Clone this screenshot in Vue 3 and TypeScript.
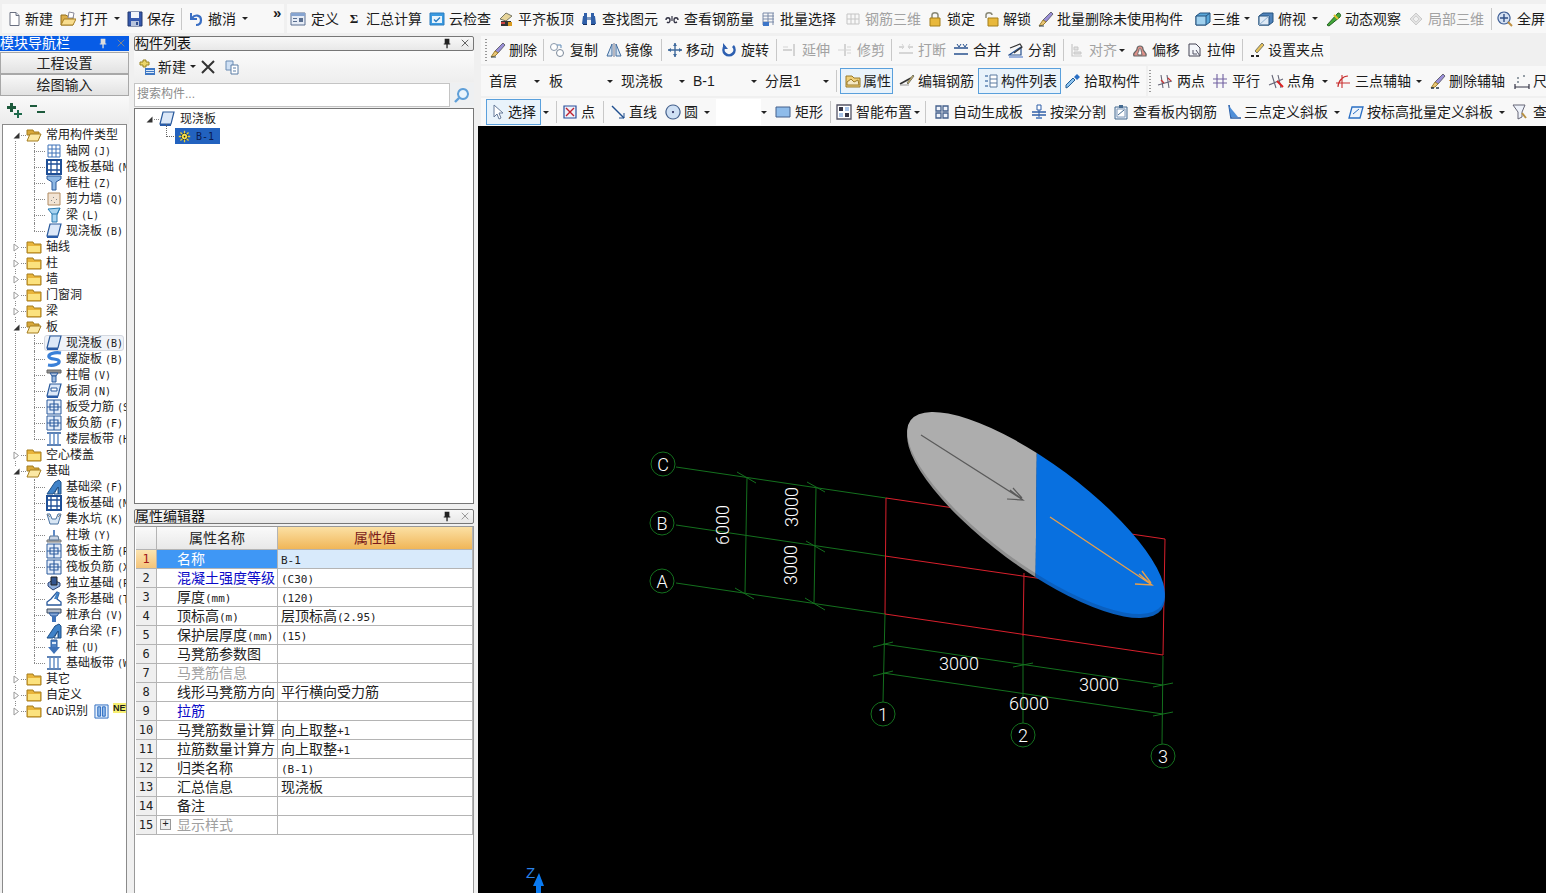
<script setup lang="ts">
import { h } from 'vue'
import type { FunctionalComponent } from 'vue'

type P = [string, string, string?, number?]
const icons: Record<string, P[]> = {
  doc: [['M4 1.5h6l3 3v10H4z', '#fff', '#6a7080'], ['M10 1.5v3h3', '#dde3ee', '#6a7080']],
  open: [['M1 4h5l1 1h6v9H1z', '#dcae4a', '#94701e'], ['M9 1l5 1-1 5H8z', '#fff', '#889'], ['M4 8h12l-3 6H1z', '#f8dd8e', '#a67f24']],
  save: [['M1 1h14v14H1z', '#3558ac', '#22386e'], ['M4 1h8v6H4z', '#f2f4fa'], ['M4 10h8v5H4z', '#b8c4dc'], ['M9 11h2v3H9z', '#33508f']],
  undo: [['M3 2v6h6', 'none', '#3a6fc4', 2], ['M4 7c3-4 9-3 9 2 0 3-2 5-5 5', 'none', '#3a6fc4', 2.2]],
  table: [['M1 2h14v12H1z', '#e6ecf6', '#5a6f90'], ['M1 2h14v3H1z', '#86a4d0'], ['M3 7h4v1H3zM3 10h4v1H3zM9 7h4v4H9z', '#5a6f90']],
  cloud: [['M1 2h14v12H1z', '#3a9ae0', '#2b7cc0'], ['M3 5h10v7H3z', '#e8f4fc'], ['M5 8.5l2 2 4-4', 'none', '#2b7cc0', 1.4]],
  alignTop: [['M2 8l6-6 6 3-6 5z', '#e6d49a', '#776'], ['M3 10h10v5H3z', '#333'], ['M10 11h4v4h-4z', '#d99a20'], ['M3 11h4v2H3z', '#c44']],
  find: [['M3 2h3v3H3zM10 2h3v3h-3z', '#2f5fa8'], ['M2 5h4v8H1z', '#2f5fa8'], ['M10 5h4l1 8h-5z', '#2f5fa8'], ['M6 6h4v3H6z', '#7f98bd'], ['M2 13h4v1H2zM10 13h4v1h-4z', '#16305f']],
  view: [['M2 9c0-3 4-3 4 0s-2 3-3 2M14 9c0-3-4-3-4 0s1 3 3 2', 'none', '#334', 1.4], ['M8 5v5', 'none', '#334', 1.2]],
  batch: [['M2 2h11M2 5h11M2 8h11M2 11h11M2 2v12M7 2v12M12 2v12', 'none', '#7a8aa8', 1], ['M2 11h6v4H2z', '#3d76c8']],
  rebar3d: [['M2 3h12v10H2zM6 3v10M10 3v10M2 8h12', 'none', '#b8b8b8', 1]],
  lock: [['M5 7V4c0-3 6-3 6 0v3', 'none', '#887', 1.5], ['M3 7h10v8H3z', '#e8b83c', '#a47e1a']],
  unlock: [['M3 7V4c0-3 6-3 6 0', 'none', '#887', 1.5], ['M5 7h10v8H5z', '#e8b83c', '#a47e1a']],
  brush: [['M13 1l2 2-7 8-3-2z', '#9a8fd8', '#667'], ['M5 9l3 2-3 3-4 1z', '#eac777', '#a08030'], ['M1 15h5', 'none', '#345', 1]],
  cube: [['M1 5l4-3h10v9l-4 3H1z', '#58a6d8', '#24527e'], ['M1 5h10v9H1z', '#9fd0ee', '#24527e'], ['M11 5l4-3', 'none', '#24527e']],
  cubeTop: [['M1 5l4-3h10v9l-4 3H1z', '#4f83bb', '#24527e'], ['M1 5h10v9H1z', '#dfeaf5', '#24527e'], ['M1 14l10-9', 'none', '#8fb0d0']],
  orbit: [['M1 14L12 2c3 0 3 3 2 4L3 15z', '#44a83a', '#236020'], ['M8 4l4 4', 'none', '#e0c030', 2]],
  local3d: [['M2 8l6-6 6 6-6 6z', '#ddd', '#c0c0c0'], ['M5 8l3-3 3 3-3 3z', '#f0f0f0', '#c8c8c8']],
  full: [['M7 1a6 6 0 1 0 .01 0z', '#d4e0f2', '#3f5f96', 1.2], ['M7 3v8M3 7h8', 'none', '#2f4f86', 1.4], ['M11 11l4 4', 'none', '#c09040', 2]],
  copy2: [['M5 5m-3.5 0a3.5 3.5 0 1 0 7 0a3.5 3.5 0 1 0-7 0', '#fff', '#8a98aa'], ['M11 11m-3.5 0a3.5 3.5 0 1 0 7 0a3.5 3.5 0 1 0-7 0', '#fff', '#7a8898'], ['M8 3l4 0 0 3', 'none', '#5f8bb8']],
  mirror: [['M1 14L6 2v12z', '#d8e6f4', '#3f6a9c'], ['M15 14L10 2v12z', '#d8e6f4', '#3f6a9c'], ['M8 1v14', 'none', '#778']],
  move: [['M8 1v14M1 8h14', 'none', '#3f6a9c', 1.4], ['M8 1l-2 3h4zM8 15l-2-3h4zM1 8l3-2v4zM15 8l-3-2v4z', '#3f6a9c']],
  rotate: [['M12 4a5.5 5.5 0 1 1-8 0', 'none', '#2d5fb0', 2.6], ['M2 1v6h5z', '#2d5fb0']],
  extend: [['M12 2v12', 'none', '#b8b8b8', 1.4], ['M1 8h9', 'none', '#b8b8b8', 1.4], ['M1 5h5', 'none', '#ccc', 1]],
  trim: [['M8 2v12', 'none', '#b8b8b8', 1.4], ['M1 8h13M10 5h4M10 11h4', 'none', '#ccc', 1]],
  breakx: [['M1 5h5M10 5h5M1 11h14', 'none', '#c0c0c0', 1.4], ['M4 2l2 3-2 2M12 2l-2 3 2 2', 'none', '#ccc', 1]],
  merge: [['M1 6h14M1 12h14', 'none', '#28528f', 1.6], ['M4 2l2 3 2-3M10 2l2 3 2-3', 'none', '#28528f', 1]],
  split: [['M1 13l12-8v8z', 'none', '#25508f', 1.2], ['M2 6l10-4 2 3-8 6', 'none', '#333', 1.2], ['M1 15h14', 'none', '#3f6ac0', 1]],
  align2: [['M3 2v12h10', 'none', '#bbb', 1.2], ['M5 5h4v3H5zM5 10h7v2H5z', '#ddd', '#bbb']],
  offset: [['M2 14c-2-4 3-4 3-7 0-4 6-4 6 0 0 3 4 3 3 7z', '#e09088', '#666', 1.2], ['M6 13c-1-2 1-3 1-5s2-2 2 0 1 3 1 5z', '#fff', '#666']],
  stretch: [['M2 2h7l4 4v8H2z', '#f4f6fa', '#445'], ['M9 8l4 6M6 8v4h4', 'none', '#556']],
  grip: [['M13 1l2 2-7 8-2-2z', '#e8c35a', '#776'], ['M2 14h3M7 14h3', 'none', '#222', 2]],
  attr: [['M1 3h6l2 2h6v9H1z', '#efcf78', '#9a7a28'], ['M2 9l4-3 3 3 4-2 1 5H2z', '#f4e8c4', '#9a7a28']],
  editRebar: [['M1 11l11-6', 'none', '#333', 1.6], ['M8 10l6-8 1 1-6 8z', '#e2bf5e', '#776'], ['M1 12h9', 'none', '#999', 1]],
  list: [['M2 2h3v2H2zM2 7h3v2H2zM2 12h3v2H2z', '#7f9fc4'], ['M7 2h7v12H7z', '#fff', '#5a7aa0'], ['M7 6h7M7 10h7', 'none', '#5a7aa0']],
  pick: [['M1 15l2-1 7-7-2-2-7 7z', '#8fc4ee', '#245e96'], ['M9 4l3-3 3 3-3 3z', '#2a6fc4']],
  twoPt: [['M1 12L15 8M4 2l2 13M10 2l2 13', 'none', '#667', 1.1], ['M4 7l3 3M11 5l3 3', 'none', '#c33', 1.2]],
  parallel: [['M5 1v14M11 1v14M1 6h14M1 10h14', 'none', '#7060a0', 1.1]],
  angle: [['M1 12L15 6M4 2l4 13M10 2l3 13', 'none', '#667', 1.1], ['M9 8l6 6', 'none', '#d22', 2]],
  threePt: [['M1 10h14M7 2v13M3 14c0-6 5-11 10-11', 'none', '#c83030', 1.1]],
  delAux: [['M13 1l2 2-7 8-3-2z', '#9a8fd8', '#667'], ['M5 9l3 2-3 3-4 1z', '#eac777', '#a08030'], ['M1 15h3M6 15h3', 'none', '#234', 1.4]],
  ruler: [['M1 14h14M1 11v5M15 11v5', 'none', '#334', 1.2], ['M3 9h2M3 5h2M9 3h2', 'none', '#345', 1.2]],
  arrow: [['M3 1v12l3-3 2 5 2-1-2-5h4z', '#fff', '#667a99']],
  point: [['M2 2h12v12H2z', '#eef2fa', '#2a4f9c', 1.2], ['M4 4l8 8M12 4l-8 8', 'none', '#c02030', 1.4]],
  line: [['M2 2l12 12', 'none', '#1f4f8f', 1.4], ['M14 9v5H9', 'none', '#1f4f8f', 1]],
  circle: [['M8 1a7 7 0 1 0 .01 0z', '#cfe0f4', '#44608c', 1.2], ['M8 7a1 1 0 1 0 .01 0z', '#225']],
  rect: [['M1 3h14v10H1z', '#8fbcea', '#44608c']],
  smart: [['M1 1h14v14H1z', '#fff', '#556', 1.3], ['M3 3h4v4H3zM9 9h4v4H9z', '#334'], ['M9 3h4v4H9zM3 9h4v4H3z', '#a8c4e8']],
  autogen: [['M2 2h5v5H2zM9 2h5v5H9zM2 9h5v5H2zM9 9h5v5H9z', '#eef2fa', '#44608c', 1.3]],
  beamSplit: [['M6 1h4v5H6z', '#fff', '#2f5fa8'], ['M1 8h14M1 11h14', 'none', '#2f5fa8', 1.4], ['M8 6v9', 'none', '#2f5fa8', 1], ['M5 13h6v2H5z', '#6f94c8']],
  viewBoard: [['M2 3h12v12H2z', '#e8eef6', '#446a90'], ['M4 5h8v8H4z', '#fff', '#7f98b8'], ['M5 11l6-5', 'none', '#446a90'], ['M6 1h4v3H6z', '#446a90']],
  threeSlope: [['M3 1l2 13h10', 'none', '#2a5fa8', 1.6], ['M3 2l9 11H5z', '#4f8fd8']],
  heightSlope: [['M4 3h11l-3 11H1z', '#eef4fb', '#2a6fc4', 1.3], ['M5 10l6-5', 'none', '#2a6fc4']],
  viewQ: [['M1 1h12l-3 7v5l-4 2V8z', '#eef2fa', '#667'], ['M10 9l4 5', 'none', '#b89040', 2]],
  newList: [['M1 3h3V1h3v2h3v3H7v2H4V6H1z', '#ecd66a', '#9a8420'], ['M6 9h10v7H6z', '#3f78c4'], ['M7 11h8v1H7zM7 13h8v1H7z', '#dce8f6']],
  xBig: [['M2 2l12 12M14 2L2 14', 'none', '#333', 2]],
  copy: [['M2 2h7v9H2z', '#cfe0f4', '#6a8cb4'], ['M7 6h7v9H7z', '#fff', '#5a7ca4'], ['M9 9h3M9 12h3', 'none', '#5a7ca4']],
  search: [['M9 2a5 5 0 1 0 .01 0z', '#eaf4fc', '#5f9fd8', 2], ['M5 11l-4 4', 'none', '#5f9fd8', 2.4]],
  plusTree: [['M3 1h3v3h3v3H6v3H3V7H0V4h3z', '#1d5a3c'], ['M10 8h2v3h3v2h-3v3h-2v-3H7v-2h3z', '#1d6a4c']],
  minusTree: [['M0 3h7v2H0z', '#1d5a3c'], ['M7 9h8v2H7z', '#1d5a3c']],
  foldC: [['M1 3h6l1 2h7v9H1z', '#e8b43a', '#a47c1e'], ['M2 7h12v6H2z', '#fbe27e']],
  foldO: [['M1 3h6l1 2h5v3H1z', '#d8a83a', '#a47c1e'], ['M1 14l3-7h11l-3 7z', '#fbe8a4', '#a47c1e']],
  grid: [['M2 2v12M6 2v12M10 2v12M14 2v12M2 2h12M2 6h12M2 10h12M2 14h12', 'none', '#3f72b8', 1]],
  raft: [['M1 1h14v14H1z', '#fff', '#1f4f96', 2], ['M5 1v14M11 1v14M1 5h14M1 11h14', 'none', '#1f4f96', 1.3]],
  column: [['M1 1h14v3l-5 3v8H6V7L1 4z', '#8fb8e4', '#2a5a9c']],
  wall: [['M2 2h12v12H2z', '#f2e4d4', '#b08a60'], ['M5 9h1v1H5zM8 11h1v1H8zM10 8h1v1h-1zM7 6h1v1H7z', '#888']],
  beam: [['M2 2l12-1-3 7v7H6V7z', '#a8d4f0', '#2a7ab0'], ['M6 7h5l3-6', 'none', '#2a7ab0']],
  slab: [['M4 1h11l-3 12H1z', '#dce8f8', '#2a5a9c', 1.2], ['M1 13h11v2H1z', '#2a5ca8']],
  spiral: [['M15 2C8 1 2 3 3 6s9 1 10 4-5 5-11 4', 'none', '#3a80d8', 3.2]],
  cap: [['M1 3h14v3H1z', '#909090', '#666'], ['M4 6h8l-2 3H6z', '#b8c8e0', '#2a5a9c'], ['M6 9h4v6H6z', '#a0bce0', '#2a5a9c']],
  hole: [['M4 1h11l-3 12H1z', '#dce8f8', '#2a5a9c', 1.2], ['M5 5h6v3H5z', '#fff', '#2a5a9c'], ['M1 13h11v2H1z', '#2a5ca8']],
  rebarP: [['M1 1h14v14H1z', '#e6eefa', '#2a5a9c'], ['M8 1v14M1 8h14M4 5h8v6H4z', 'none', '#2a5a9c', 1.1]],
  strip: [['M1 2h14M1 14h14', 'none', '#2a5a9c', 1.6], ['M4 2v12M8 2v12M12 2v12', 'none', '#5f8ac4', 1.4]],
  fbeam: [['M1 15L9 3l4-2 2 2v12h-3V8L7 15z', '#3f82c8', '#1d4f86'], ['M8 15l4-7 0 7z', '#fff', '#1d4f86']],
  sump: [['M1 3h3l2 5h4l2-5h3l-3 10H4z', '#d8e6f4', '#4a72a0'], ['M1 3l3 3M15 3l-3 3', 'none', '#888']],
  pier: [['M1 13h14v2H1z', '#bbb', '#777'], ['M4 9h8l1 4H3z', '#c8d4e4', '#55708f'], ['M7 3h2v6H7z', '#5f8ac4']],
  iso: [['M2 8l5-3 7 3v3l-7 4-5-4z', '#8faedc', '#263f72'], ['M5 2h6v8H5z', '#33558f', '#222']],
  stripf: [['M1 14h14v-3l-4-3 2-6-2-1-6 7-4 3z', '#fff', '#2a5a9c', 1.3], ['M8 8l3-7 2 1-2 6z', '#3f82c8']],
  pilecap: [['M1 2h14v4H1z', '#b0bac8', '#3a4a60'], ['M3 6h10l-2 3H5z', '#86a8d8', '#2a5a9c'], ['M6 9h4v6H6z', '#3f72b8']],
  pile: [['M5 1h6v8H5z', '#4f82c4', '#2a5a9c'], ['M2 8h12l-6 7z', '#3f72b8'], ['M6 3h4v2H6z', '#dce8f8']],
  cadI: [['M1 1h14v14H1z', '#e6f0fb', '#2a6ac0'], ['M4 3h3v10H4zM9 3h3v10H9z', '#8fb8e8', '#2a6ac0']],
  pin: [['M5 3h5v5h1v1H8.2v4H6.8V9H4V8h1z', '#222']],
  closeX: [['M4 4l7 7M11 4l-7 7', 'none', '#555', 1]],
  sun: [['M8 4a4 4 0 1 0 .01 0z', '#f4e04c', '#222'], ['M8 1v3M8 12v3M1 8h3M12 8h3M3 3l2 2M11 11l2 2M13 3l-2 2M5 11l-2 2', 'none', '#e8d030', 1.6], ['M8 7a1 1 0 1 0 .01 0z', '#222']],
}

const Ico: FunctionalComponent<{ n: string }> = (props) =>
  h('svg', { class: 'ico', width: 16, height: 16, viewBox: '0 0 16 16' },
    (icons[props.n] || []).map((p, j) =>
      h('path', { key: j, d: p[0], fill: p[1], stroke: p[2] || 'none', 'stroke-width': p[3] || 1 })))
Ico.props = ['n']

interface Tool { x: number; k?: string; i?: string; sym?: string; t?: string; tx?: number; dis?: boolean; on?: boolean; ox?: number; w?: number }
interface Strip { x: number; end: number; items: Tool[]; ml?: number; w?: number; pl?: number }

const layoutRow = (strips: Strip[], start: number): Strip[] => {
  let cur = start
  return strips.map((s) => {
    const items = s.items.map((it, j) => ({ ...it, w: (j + 1 < s.items.length ? s.items[j + 1].x : s.end) - it.x }))
    const r = { ...s, items, ml: s.x - cur, w: s.end - s.x, pl: s.items[0].x - s.x }
    cur = s.end
    return r
  })
}
const labelGap = (it: Tool) => (it.tx === undefined ? 0 : it.tx - it.x - (it.ox || 0) - (it.i || it.sym ? 16 : 0))

const topRow = layoutRow([
  { x: 2, end: 284, items: [
    { x: 6, i: 'doc', tx: 25, t: '新建' }, { x: 60, i: 'open', tx: 80, t: '打开' }, { x: 114, k: 'caret' },
    { x: 127, i: 'save', tx: 147, t: '保存' }, { x: 181, k: 'sep' }, { x: 188, i: 'undo', tx: 208, t: '撤消' },
    { x: 242, k: 'caret' }, { x: 273, k: 'more', t: '»' },
  ] },
  { x: 287, end: 1546, items: [
    { x: 290, i: 'table', tx: 311, t: '定义' }, { x: 346, sym: 'Σ', tx: 366, t: '汇总计算' },
    { x: 429, i: 'cloud', tx: 449, t: '云检查' }, { x: 498, i: 'alignTop', tx: 518, t: '平齐板顶' },
    { x: 581, i: 'find', tx: 602, t: '查找图元' }, { x: 664, i: 'view', tx: 684, t: '查看钢筋量' },
    { x: 761, i: 'batch', tx: 780, t: '批量选择' }, { x: 845, i: 'rebar3d', tx: 865, t: '钢筋三维', dis: true },
    { x: 927, i: 'lock', tx: 947, t: '锁定' }, { x: 983, i: 'unlock', tx: 1003, t: '解锁' },
    { x: 1038, i: 'brush', tx: 1057, t: '批量删除未使用构件' }, { x: 1195, i: 'cube', tx: 1212, t: '三维' },
    { x: 1244, k: 'caret' }, { x: 1258, i: 'cubeTop', tx: 1278, t: '俯视' }, { x: 1312, k: 'caret' },
    { x: 1326, i: 'orbit', tx: 1345, t: '动态观察' }, { x: 1408, i: 'local3d', tx: 1428, t: '局部三维', dis: true },
    { x: 1491, k: 'sep' }, { x: 1497, i: 'full', tx: 1517, t: '全屏' },
  ] },
], 0)

const rows = [
  layoutRow([{ x: 481, end: 1330, items: [
    { x: 485, k: 'grip' }, { x: 490, i: 'brush', tx: 509, t: '删除' }, { x: 543, k: 'sep' },
    { x: 549, i: 'copy2', tx: 570, t: '复制' }, { x: 606, i: 'mirror', tx: 625, t: '镜像' }, { x: 661, k: 'sep' },
    { x: 667, i: 'move', tx: 686, t: '移动' }, { x: 721, i: 'rotate', tx: 741, t: '旋转' }, { x: 776, k: 'sep' },
    { x: 782, i: 'extend', tx: 802, t: '延伸', dis: true }, { x: 837, i: 'trim', tx: 857, t: '修剪', dis: true }, { x: 891, k: 'sep' },
    { x: 898, i: 'breakx', tx: 918, t: '打断', dis: true }, { x: 953, i: 'merge', tx: 973, t: '合并' },
    { x: 1008, i: 'split', tx: 1028, t: '分割' }, { x: 1063, k: 'sep' }, { x: 1069, i: 'align2', tx: 1089, t: '对齐', dis: true },
    { x: 1119, k: 'caret' }, { x: 1132, i: 'offset', tx: 1152, t: '偏移' }, { x: 1187, i: 'stretch', tx: 1207, t: '拉伸' },
    { x: 1242, k: 'sep' }, { x: 1249, i: 'grip', tx: 1268, t: '设置夹点' },
  ] }], 478),
  layoutRow([
    { x: 481, end: 1146, items: [
      { x: 489, tx: 489, t: '首层' }, { x: 534, k: 'caret' }, { x: 549, tx: 549, t: '板' }, { x: 607, k: 'caret' },
      { x: 621, tx: 621, t: '现浇板' }, { x: 679, k: 'caret' }, { x: 693, tx: 693, t: 'B-1' }, { x: 751, k: 'caret' },
      { x: 765, tx: 765, t: '分层1' }, { x: 823, k: 'caret' }, { x: 836, k: 'sep' },
      { x: 840, i: 'attr', tx: 863, t: '属性', on: true, ox: 5 }, { x: 893, k: 'gap' }, { x: 899, i: 'editRebar', tx: 918, t: '编辑钢筋' },
      { x: 978, i: 'list', tx: 1001, t: '构件列表', on: true, ox: 5 }, { x: 1061, k: 'gap' }, { x: 1065, i: 'pick', tx: 1084, t: '拾取构件' },
    ] },
    { x: 1148, end: 1546, items: [
      { x: 1149, k: 'grip' }, { x: 1157, i: 'twoPt', tx: 1177, t: '两点' }, { x: 1212, i: 'parallel', tx: 1232, t: '平行' },
      { x: 1268, i: 'angle', tx: 1287, t: '点角' }, { x: 1322, k: 'caret' }, { x: 1335, i: 'threePt', tx: 1355, t: '三点辅轴' },
      { x: 1416, k: 'caret' }, { x: 1430, i: 'delAux', tx: 1449, t: '删除辅轴' }, { x: 1514, i: 'ruler', tx: 1533, t: '尺' },
    ] },
  ], 478),
  layoutRow([{ x: 481, end: 1546, items: [
    { x: 486, i: 'arrow', tx: 508, t: '选择', on: true, ox: 5 }, { x: 541, k: 'gap' }, { x: 543, k: 'caret' }, { x: 556, k: 'sep' },
    { x: 562, i: 'point', tx: 581, t: '点' }, { x: 603, k: 'sep' }, { x: 610, i: 'line', tx: 629, t: '直线' },
    { x: 665, i: 'circle', tx: 684, t: '圆' }, { x: 704, k: 'caret' }, { x: 716, k: 'blank' }, { x: 761, k: 'caret' },
    { x: 775, i: 'rect', tx: 795, t: '矩形' }, { x: 830, k: 'sep' }, { x: 836, i: 'smart', tx: 856, t: '智能布置' },
    { x: 914, k: 'caret' }, { x: 925, k: 'sep' }, { x: 934, i: 'autogen', tx: 953, t: '自动生成板' },
    { x: 1031, i: 'beamSplit', tx: 1050, t: '按梁分割' }, { x: 1113, i: 'viewBoard', tx: 1133, t: '查看板内钢筋' },
    { x: 1226, i: 'threeSlope', tx: 1244, t: '三点定义斜板' }, { x: 1334, k: 'caret' },
    { x: 1348, i: 'heightSlope', tx: 1367, t: '按标高批量定义斜板' }, { x: 1499, k: 'caret' }, { x: 1512, i: 'viewQ', tx: 1533, t: '查' },
  ] }], 478),
]

interface Node { l: number; t: string; c?: string; i?: string; open?: boolean; last?: boolean; hov?: boolean; cad?: boolean }
const tree: Node[] = [
  { l: 0, t: '常用构件类型', open: true },
  { l: 1, i: 'grid', t: '轴网', c: '(J)' }, { l: 1, i: 'raft', t: '筏板基础', c: '(M)' }, { l: 1, i: 'column', t: '框柱', c: '(Z)' },
  { l: 1, i: 'wall', t: '剪力墙', c: '(Q)' }, { l: 1, i: 'beam', t: '梁', c: '(L)' }, { l: 1, i: 'slab', t: '现浇板', c: '(B)', last: true },
  { l: 0, t: '轴线' }, { l: 0, t: '柱' }, { l: 0, t: '墙' }, { l: 0, t: '门窗洞' }, { l: 0, t: '梁' },
  { l: 0, t: '板', open: true },
  { l: 1, i: 'slab', t: '现浇板', c: '(B)', hov: true }, { l: 1, i: 'spiral', t: '螺旋板', c: '(B)' }, { l: 1, i: 'cap', t: '柱帽', c: '(V)' },
  { l: 1, i: 'hole', t: '板洞', c: '(N)' }, { l: 1, i: 'rebarP', t: '板受力筋', c: '(S)' }, { l: 1, i: 'rebarP', t: '板负筋', c: '(F)' },
  { l: 1, i: 'strip', t: '楼层板带', c: '(H)', last: true },
  { l: 0, t: '空心楼盖' },
  { l: 0, t: '基础', open: true },
  { l: 1, i: 'fbeam', t: '基础梁', c: '(F)' }, { l: 1, i: 'raft', t: '筏板基础', c: '(M)' }, { l: 1, i: 'sump', t: '集水坑', c: '(K)' },
  { l: 1, i: 'pier', t: '柱墩', c: '(Y)' }, { l: 1, i: 'rebarP', t: '筏板主筋', c: '(R)' }, { l: 1, i: 'rebarP', t: '筏板负筋', c: '(X)' },
  { l: 1, i: 'iso', t: '独立基础', c: '(P)' }, { l: 1, i: 'stripf', t: '条形基础', c: '(T)' }, { l: 1, i: 'pilecap', t: '桩承台', c: '(V)' },
  { l: 1, i: 'fbeam', t: '承台梁', c: '(F)' }, { l: 1, i: 'pile', t: '桩', c: '(U)' }, { l: 1, i: 'strip', t: '基础板带', c: '(W)', last: true },
  { l: 0, t: '其它' }, { l: 0, t: '自定义' }, { l: 0, t: 'CAD识别', cad: true },
]

const runs = (s: string) =>
  (s.match(/[\x00-\x7f]+|[^\x00-\x7f]+/g) || []).map((t) => ({ t, lat: /^[\x00-\x7f]/.test(t) }))

const props = [
  { n: '名称', v: 'B-1', sel: true },
  { n: '混凝土强度等级', v: '(C30)', tone: 'blue' },
  { n: '厚度(mm)', v: '(120)' },
  { n: '顶标高(m)', v: '层顶标高(2.95)' },
  { n: '保护层厚度(mm)', v: '(15)' },
  { n: '马凳筋参数图', v: '' },
  { n: '马凳筋信息', v: '', tone: 'gray' },
  { n: '线形马凳筋方向', v: '平行横向受力筋' },
  { n: '拉筋', v: '', tone: 'blue' },
  { n: '马凳筋数量计算', v: '向上取整+1' },
  { n: '拉筋数量计算方', v: '向上取整+1' },
  { n: '归类名称', v: '(B-1)' },
  { n: '汇总信息', v: '现浇板' },
  { n: '备注', v: '' },
  { n: '显示样式', v: '', tone: 'gray', plus: true },
]

const greenLines = [
  'M676 467L886 498', 'M676 525L885 556', 'M676 583L885 614',
  'M747 477L745 593', 'M816 487L814 604',
  'M737 472L756 483', 'M807 482L825 492', 'M806 541L825 552', 'M735 588L754 599', 'M805 598L825 610',
  'M885 614L883 702', 'M1023 636L1023 723', 'M1163 656L1162 744',
  'M883 644L1163 685', 'M883 673L1163 714',
  'M873 647L893 642', 'M873 676L893 671', 'M1013 667L1033 663', 'M1153 687L1173 683', 'M1153 716L1173 712',
]
const redLines = [
  'M886 498L1165 539', 'M885 556L1043 579', 'M885 614L1163 655',
  'M886 498L885 614', 'M1024 573L1023 636', 'M1165 539L1163 655',
  'M1043 579L1165 597',
]
const bubbles = [
  { x: 663, y: 464, t: 'C' }, { x: 662, y: 523, t: 'B' }, { x: 662, y: 581, t: 'A' },
  { x: 883, y: 714, t: '1' }, { x: 1023, y: 735, t: '2' }, { x: 1163, y: 756, t: '3' },
]
const dims = [
  { x: 959, y: 670, t: '3000' }, { x: 1099, y: 691, t: '3000' }, { x: 1029, y: 710, t: '6000' },
]
const vdims = [
  { x: 729, y: 525, t: '6000' }, { x: 798, y: 507, t: '3000' }, { x: 797, y: 565, t: '3000' },
]
</script>

<template>
  <div class="app">
    <div class="tb tb-top">
      <div v-for="(s, si) in topRow" :key="si" class="strip" :style="{ marginLeft: s.ml + 'px', width: s.w + 'px', paddingLeft: s.pl + 'px' }">
        <div v-for="(it, j) in s.items" :key="j" class="tool" :class="[it.k, { dis: it.dis, on: it.on }]" :style="{ width: it.w + 'px' }">
          <Ico v-if="it.i" :n="it.i" :style="{ marginLeft: (it.ox || 0) + 'px' }" />
          <span v-if="it.sym" class="sym">{{ it.sym }}</span>
          <span v-if="it.t" class="lbl" :style="{ marginLeft: labelGap(it) + 'px' }">{{ it.t }}</span>
        </div>
      </div>
    </div>

    <div class="main">
      <aside class="nav">
        <div class="nav-title">
          <span>模块导航栏</span>
          <span class="ctl"><Ico n="pin" /><Ico n="closeX" class="light" /></span>
        </div>
        <button class="nav-btn">工程设置</button>
        <button class="nav-btn">绘图输入</button>
        <div class="nav-tools"><Ico n="plusTree" /><Ico n="minusTree" /></div>
        <div class="tree">
          <div class="trunk"></div>
          <div v-for="(n, j) in tree" :key="j" class="node" :class="['l' + n.l, { last: n.last, hov: n.hov }]">
            <template v-if="n.l === 0">
              <svg class="arrow" width="9" height="9" viewBox="0 0 9 9">
                <path v-if="n.open" d="M7.5 1.5v6h-6z" fill="#333" />
                <path v-else d="M2 1v7l4.5-3.5z" fill="#fff" stroke="#999" />
              </svg>
              <Ico :n="n.open ? 'foldO' : 'foldC'" />
            </template>
            <template v-else>
              <i class="dot-v"></i><i class="dot-h"></i>
              <span class="hov-wrap"></span>
              <Ico :n="n.i || 'grid'" />
            </template>
            <span class="name">
              <span v-for="(r, q) in runs(n.t)" :key="q" :class="{ lat: r.lat }">{{ r.t }}</span>
              <span v-if="n.c" class="code">{{ n.c }}</span>
            </span>
            <template v-if="n.cad">
              <Ico n="cadI" class="cad-ico" />
              <span class="new">NEW</span>
            </template>
          </div>
        </div>
      </aside>

      <section class="mid">
        <div class="title">
          <span>构件列表</span>
          <span class="ctl"><Ico n="pin" /><Ico n="closeX" /></span>
        </div>
        <div class="list-tools">
          <Ico n="newList" /><span class="lbl new-lbl">新建</span><i class="tri"></i>
          <Ico n="xBig" class="x-ico" /><Ico n="copy" class="copy-ico" />
        </div>
        <div class="search">
          <div class="input">搜索构件...</div>
          <div class="sbtn"><Ico n="search" /></div>
        </div>
        <div class="list-tree">
          <div class="lt-row">
            <svg class="arrow2" width="9" height="9" viewBox="0 0 9 9"><path d="M7.5 1.5v6h-6z" fill="#333" /></svg>
            <i class="lt-dash"></i>
            <Ico n="slab" />
            <span class="lt-name">现浇板</span>
          </div>
          <div class="lt-row lt-child">
            <i class="lt-elbow"></i>
            <div class="lt-sel"><Ico n="sun" class="sun" /><span>B-1</span></div>
          </div>
        </div>
        <div class="title title2">
          <span>属性编辑器</span>
          <span class="ctl"><Ico n="pin" /><Ico n="closeX" class="light" /></span>
        </div>
        <div class="grid-wrap">
          <div class="grow ghead">
            <div class="c0"></div>
            <div class="c1">属性名称</div>
            <div class="c2">属性值</div>
          </div>
          <div v-for="(p, j) in props" :key="j" class="grow" :class="{ sel: p.sel }">
            <div class="c0">{{ j + 1 }}</div>
            <div class="c1" :class="p.tone">
              <span v-if="p.plus" class="plus">+</span>
              <span v-for="(r, q) in runs(p.n)" :key="q" :class="{ lat: r.lat }">{{ r.t }}</span>
            </div>
            <div class="c2">
              <span v-for="(r, q) in runs(p.v)" :key="q" :class="{ lat: r.lat }">{{ r.t }}</span>
            </div>
          </div>
        </div>
      </section>

      <section class="right">
        <div v-for="(row, ri) in rows" :key="ri" class="tb" :class="'tb' + ri">
          <div v-for="(s, si) in row" :key="si" class="strip" :style="{ marginLeft: s.ml + 'px', width: s.w + 'px', paddingLeft: s.pl + 'px' }">
            <div v-for="(it, j) in s.items" :key="j" class="tool" :class="[it.k, { dis: it.dis, on: it.on }]" :style="{ width: it.w + 'px' }">
              <Ico v-if="it.i" :n="it.i" :style="{ marginLeft: (it.ox || 0) + 'px' }" />
              <span v-if="it.t" class="lbl" :style="{ marginLeft: labelGap(it) + 'px' }">{{ it.t }}</span>
            </div>
          </div>
        </div>
        <div class="canvas">
          <svg width="1068" height="767" viewBox="478 126 1068 767">
            <defs>
              <clipPath id="leftPart"><path d="M880 380H1037.5L1035 640H880z" /></clipPath>
              <clipPath id="rightPart"><path d="M1037.5 380H1200V640H1035z" /></clipPath>
            </defs>
            <g fill="none" stroke-width="1">
              <path v-for="(d, j) in greenLines" :key="j" :d="d" stroke="#14701e" />
              <path v-for="(d, j) in redLines" :key="'r' + j" :d="d" stroke="#d9202c" />
            </g>
            <g clip-path="url(#leftPart)">
              <ellipse cx="1036" cy="517" rx="156" ry="50" transform="rotate(36.5 1036 517)" fill="#8f8f8f" />
              <ellipse cx="1036" cy="513" rx="156" ry="50" transform="rotate(36.5 1036 513)" fill="#adadad" />
            </g>
            <g clip-path="url(#rightPart)">
              <ellipse cx="1036" cy="517" rx="156" ry="50" transform="rotate(36.5 1036 517)" fill="#0a5fbe" />
              <ellipse cx="1036" cy="513" rx="156" ry="50" transform="rotate(36.5 1036 513)" fill="#0870e0" />
            </g>
            <path d="M921 435L1023 500M1010 490L1023 500L1007 499M1013 488L1022 498" fill="none" stroke="#5a5a5a" stroke-width="1.2" />
            <path d="M1050 517L1152 585M1139 574L1152 585L1135 584M1142 571L1151 583" fill="none" stroke="#e8a04a" stroke-width="1.3" />
            <g v-for="(b, j) in bubbles" :key="'b' + j">
              <circle :cx="b.x" :cy="b.y" r="12" fill="#000" stroke="#14701e" stroke-width="1" />
              <text :x="b.x" :y="b.y + 7" class="cad" text-anchor="middle">{{ b.t }}</text>
            </g>
            <text v-for="(d, j) in dims" :key="'d' + j" :x="d.x" :y="d.y" class="cad" text-anchor="middle">{{ d.t }}</text>
            <text v-for="(d, j) in vdims" :key="'v' + j" :x="d.x" :y="d.y" class="cad" text-anchor="middle" :transform="`rotate(-90 ${d.x} ${d.y})`">{{ d.t }}</text>
            <text x="526" y="878" class="zlab">Z</text>
            <path d="M539 873L544 886H541V893H536V886H533z" fill="#0a7af0" />
          </svg>
        </div>
      </section>
    </div>
  </div>
</template>

<style>
html, body { margin: 0; background: #f0f0f0; overflow: hidden; }
</style>

<style scoped>
.app {
  width: 1546px;
  height: 893px;
  overflow: hidden;
  display: flex;
  flex-direction: column;
  background: #f0f0f0;
  color: #1c1c1c;
  font: 14px/16px "Liberation Sans", "Noto Sans CJK SC", sans-serif;
}
.tb { display: flex; height: 30px; flex: none; box-sizing: border-box; }
.tb0 { padding-bottom: 2px; }
.tb2 { padding-top: 2px; }
.tb-top { height: 36px; padding: 4px 0 3px; }
.strip {
  display: flex;
  align-items: center;
  box-sizing: border-box;
  background: #f8f8f8;
  flex: none;
  height: 100%;
  overflow: hidden;
}
.tool { display: flex; align-items: center; flex: none; height: 100%; white-space: nowrap; box-sizing: border-box; }
.tool.dis .lbl { color: #a2a2a2; }
.tool.dis .ico { opacity: .8; }
.tool.on { height: 26px; box-shadow: inset 0 0 0 1px #5aa0dc; background: #e9f3fb; }
.ico { flex: none; display: block; }
.sym { width: 16px; text-align: center; font: bold 13px "Liberation Serif", serif; flex: none; }
.sep::before { content: ""; width: 1px; height: 22px; background: #c8c8c8; }
.caret::before { content: ""; border: 3px solid transparent; border-top: 3px solid #222; border-bottom: 0; }
.more .lbl { font-size: 15px; margin-top: -12px; font-weight: bold; }
.blank { background: #fff; height: 26px; }
.grip::before { content: ""; width: 2px; height: 22px; background-image: linear-gradient(#999 50%, transparent 50%); background-size: 2px 3px; }
.main { flex: 1; display: flex; min-height: 0; }
.nav { width: 129px; flex: none; display: flex; flex-direction: column; }
.nav-title {
  height: 15px;
  background: #075ce6;
  color: #fff;
  display: flex;
  justify-content: space-between;
  line-height: 14px;
  overflow: hidden;
}
.ctl { display: flex; gap: 3px; align-items: center; height: 15px; margin-right: 0; }
.ctl .ico { width: 15px; height: 15px; }
.nav-title .ico:first-child { filter: invert(1); }
.light { filter: invert(1) brightness(.8); }
.title .light { filter: none; opacity: .6; }
.nav-btn {
  display: block;
  width: 129px;
  height: 22px;
  padding: 0;
  border: 1px solid #a8a8a8;
  margin: 0;
  background: linear-gradient(#f8f8f8, #e2e2e2);
  font: inherit;
  color: #222;
}
.nav-title + .nav-btn { margin-top: 1px; }
.nav-tools {
  height: 28px;
  display: flex;
  align-items: center;
  gap: 7px;
  padding-left: 7px;
  background: linear-gradient(#fafafa, #ececec);
}
.tree {
  position: relative;
  margin-left: 2px;
  width: 125px;
  flex: 1;
  box-sizing: border-box;
  border: 1px solid #8a8a8a;
  border-bottom: 0;
  background: #fff;
  padding-top: 2px;
  overflow: hidden;
  font-size: 12px;
}
.trunk { position: absolute; left: 12px; top: 10px; height: 577px; border-left: 1px dotted #888; }
.node { position: relative; height: 16px; display: flex; align-items: center; white-space: nowrap; }
.node.l0 { padding-left: 23px; }
.node.l1 { padding-left: 43px; }
.name { margin-left: 4px; flex: none; position: relative; }
.lat { font: 10px "DejaVu Sans Mono", monospace; }
.code { font: 10px "DejaVu Sans Mono", monospace; margin-left: 3px; }
.arrow { position: absolute; left: 9px; top: 4px; background: #fff; }
.l0 .ico { position: relative; }
.l0::after { content: ""; position: absolute; left: 18px; top: 8px; width: 5px; border-top: 1px dotted #888; }
.dot-v { position: absolute; left: 31px; top: 0; bottom: 0; border-left: 1px dotted #888; }
.last .dot-v { bottom: 8px; }
.dot-h { position: absolute; left: 31px; top: 8px; width: 11px; border-top: 1px dotted #888; }
.hov-wrap { display: none; }
.hov .hov-wrap {
  display: block;
  position: absolute;
  left: 41px;
  top: 0;
  width: 80px;
  height: 16px;
  box-sizing: border-box;
  border: 1px solid #d4d8e0;
  border-radius: 3px;
  background: #f0f3f8;
}
.hov .ico { position: relative; }
.cad-ico { margin-left: 6px; width: 15px; height: 15px; }
.new { margin-left: 4px; font: bold 9px/10px "Liberation Sans", sans-serif; background: #f6ee70; margin-top: -6px; }
.mid { width: 340px; flex: none; margin-left: 5px; display: flex; flex-direction: column; }
.title {
  height: 15px;
  box-sizing: border-box;
  border: 1px solid #777;
  border-radius: 2px;
  background: linear-gradient(#f8f8f8, #e8e8e8);
  display: flex;
  justify-content: space-between;
  line-height: 13px;
  overflow: hidden;
  color: #111;
  flex: none;
}
.title .ctl { margin-top: -1px; }
.list-tools { height: 31px; display: flex; align-items: center; padding-left: 5px; flex: none; background: linear-gradient(#fbfbfb, #eeeeee); }
.new-lbl { margin-left: 3px; }
.tri { border: 3px solid transparent; border-top-color: #222; border-bottom: 0; margin-left: 4px; }
.x-ico { margin-left: 4px; }
.copy-ico { margin-left: 8px; }
.search { height: 24px; margin-top: 1px; display: flex; flex: none; }
.input {
  width: 316px;
  box-sizing: border-box;
  background: #fff;
  border: 1px solid #c4c4c4;
  color: #8c8c8c;
  font-size: 12px;
  line-height: 20px;
  padding-left: 2px;
}
.sbtn { flex: 1; display: flex; align-items: center; justify-content: center; background: #eef0f2; }
.list-tree {
  height: 396px;
  margin-top: 1px;
  box-sizing: border-box;
  border: 1px solid #777;
  background: #fff;
  flex: none;
  padding-top: 1px;
  font-size: 12px;
}
.lt-row { position: relative; height: 16px; display: flex; align-items: center; padding-left: 24px; margin-top: 1px; }
.arrow2 { position: absolute; left: 10px; top: 4px; }
.lt-dash { position: absolute; left: 19px; top: 8px; width: 5px; border-top: 1px dotted #888; }
.lt-name { margin-left: 5px; }
.lt-child { padding-left: 40px; }
.lt-elbow { position: absolute; left: 31px; top: -4px; height: 12px; width: 9px; border-left: 1px dotted #666; border-bottom: 1px dotted #666; }
.lt-sel { background: #2262bf; width: 45px; height: 16px; display: flex; align-items: center; color: #0a1a50; font: 10px "DejaVu Sans Mono", monospace; }
.sun { width: 13px; height: 13px; margin-left: 3px; margin-right: 5px; }
.title2 { margin-top: 5px; }
.grid-wrap { margin-top: 2px; flex: 1; background: #fff; border: 1px solid #999; border-bottom: 0; padding-left: 1px; }
.grow { display: grid; grid-template-columns: 21px 121px 195px; height: 19px; line-height: 18px; box-sizing: border-box; }
.grow > div { border-right: 1px solid #b4b4b4; border-bottom: 1px solid #b4b4b4; white-space: nowrap; overflow: hidden; box-sizing: border-box; }
.ghead { height: 23px; line-height: 22px; }
.ghead .c0, .ghead .c1 { background: linear-gradient(#fafafa, #e8e8e8); text-align: center; }
.ghead .c1 { padding: 0; }
.ghead .c2 { background: linear-gradient(#fbe0a4, #f0b658); color: #7a1a1a; text-align: center; padding: 0; }
.c0 { background: #efefef; text-align: center; font: 12px/18px "DejaVu Sans Mono", monospace; color: #222; }
.c1 { padding-left: 20px; color: #222; }
.c2 { padding-left: 3px; color: #222; }
.grow .lat { font: 11px "DejaVu Sans Mono", monospace; }
.blue { color: #0a0ac8; }
.gray { color: #a0a0a0; }
.sel .c0 { background: linear-gradient(#fce4b0, #f4c47a); color: #a01818; }
.sel .c1 { background: #3f97f5; color: #fff; }
.sel .c2 { background: #d8eafb; }
.plus {
  position: absolute;
  margin-left: -17px;
  margin-top: 3px;
  width: 11px;
  height: 11px;
  box-sizing: border-box;
  border: 1px solid #999;
  background: #eee;
  font: 11px/9px "Liberation Mono", monospace;
  text-align: center;
  color: #222;
}
.right { width: 1068px; margin-left: 4px; flex: none; display: flex; flex-direction: column; }
.canvas { flex: 1; background: #000; overflow: hidden; min-height: 0; }
.canvas svg { display: block; }
.cad { fill: #fff; font: 300 18px Roboto, "Liberation Sans", sans-serif; }
.zlab { fill: #2a82e8; font: 15px "Liberation Sans", sans-serif; }
</style>
